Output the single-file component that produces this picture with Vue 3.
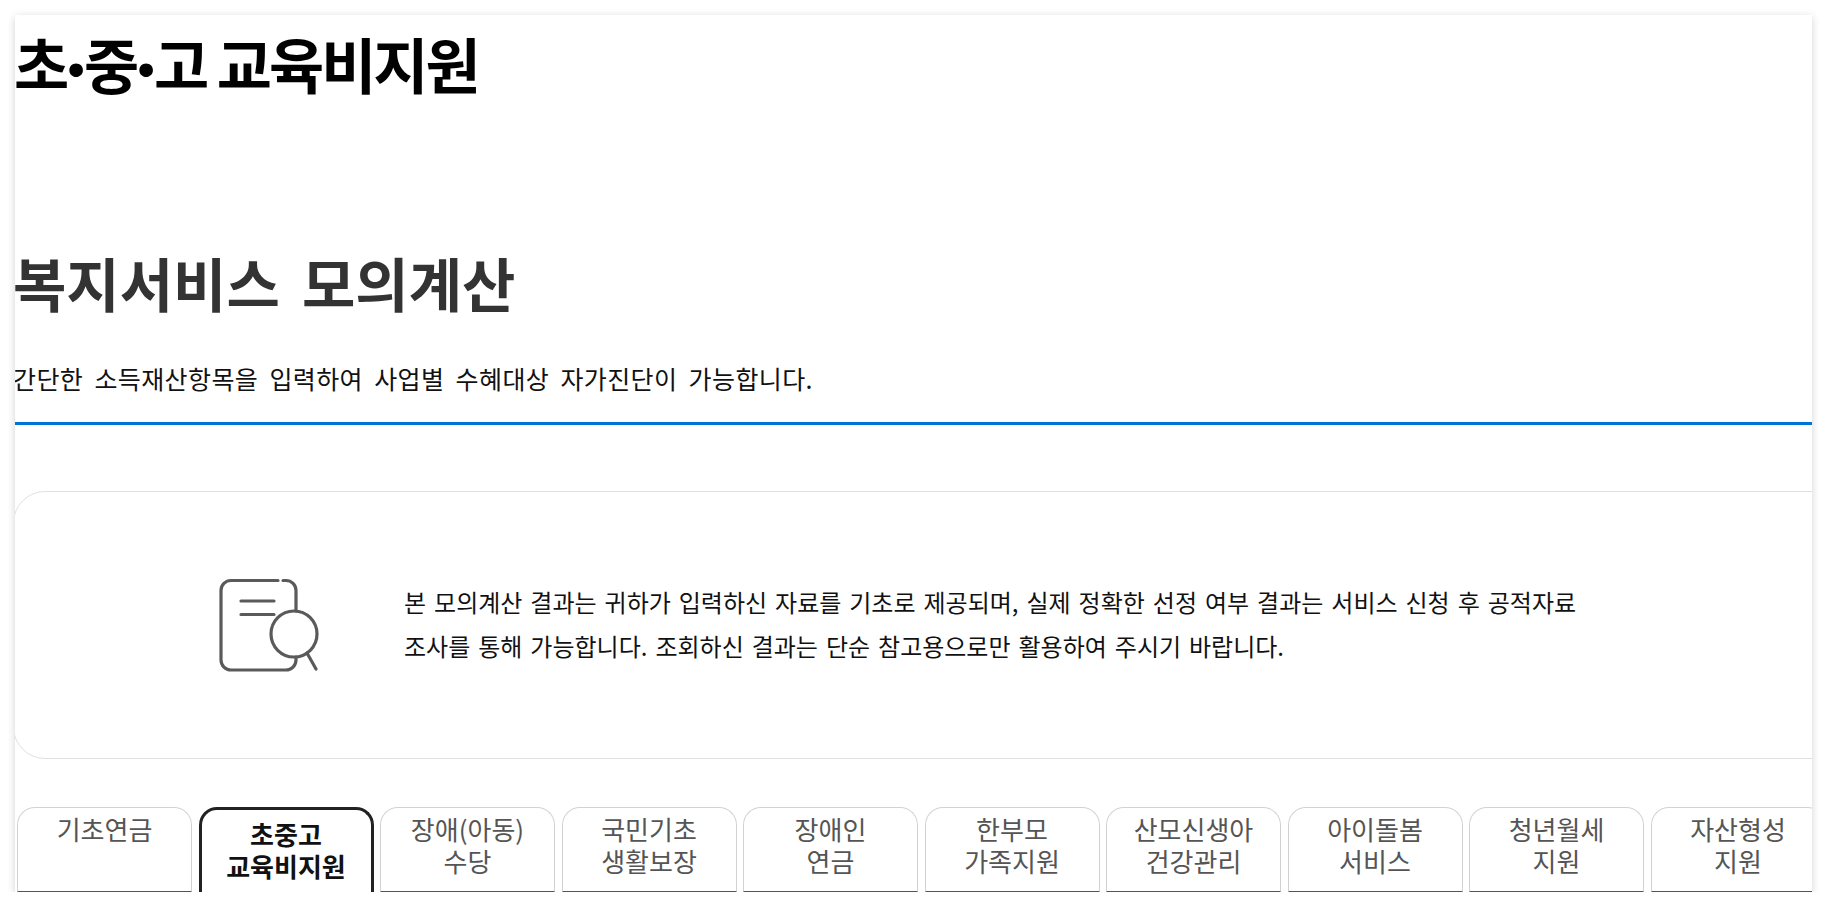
<template>
  <div class="panel">
    <h1 class="page-title">초<span class="dot">·</span>중<span class="dot">·</span>고 교육비지원</h1>

    <section class="intro">
      <h2 class="intro-title">복지서비스 모의계산</h2>
      <p class="intro-desc">간단한 소득재산항목을 입력하여 사업별 수혜대상 자가진단이 가능합니다.</p>
    </section>

    <div class="notice">
      <svg class="notice-icon" width="100" height="96" viewBox="220 576 100 96" fill="none" aria-hidden="true">
        <path d="M279 579.500H232a10 10 0 0 0-10 10V659a10 10 0 0 0 10 10h55a10 10 0 0 0 10-10v-3" />
        <path d="M284 579.500h3a10 10 0 0 1 10 10V610" />
        <path d="M242 600h33M242 613.500h33" />
        <circle cx="295" cy="633" r="23" />
        <path d="M308 652l9 16" />
      </svg>
      <p class="notice-text">
        본 모의계산 결과는 귀하가 입력하신 자료를 기초로 제공되며, 실제 정확한 선정 여부 결과는 서비스 신청 후 공적자료<br />
        조사를 통해 가능합니다. 조회하신 결과는 단순 참고용으로만 활용하여 주시기 바랍니다.
      </p>
    </div>

    <ul class="tabs">
      <li
        v-for="tab in tabs"
        :key="tab.first"
        class="tab"
        :class="{ active: tab.active }"
      >
        <span>{{ tab.first }}</span>
        <span v-if="tab.second">{{ tab.second }}</span>
      </li>
    </ul>
  </div>
</template>

<script setup>
const tabs = [
  { first: '기초연금' },
  { first: '초중고', second: '교육비지원', active: true },
  { first: '장애(아동)', second: '수당' },
  { first: '국민기초', second: '생활보장' },
  { first: '장애인', second: '연금' },
  { first: '한부모', second: '가족지원' },
  { first: '산모신생아', second: '건강관리' },
  { first: '아이돌봄', second: '서비스' },
  { first: '청년월세', second: '지원' },
  { first: '자산형성', second: '지원' },
];
</script>

<style>
html,
body {
  margin: 0;
  background: #fff;
}
</style>

<style scoped>
.panel {
  box-sizing: border-box;
  width: 1797px;
  height: 877px;
  margin: 15px 15px 0;
  overflow: hidden;
  background: #fff;
  box-shadow: 0 2px 8px rgba(0, 0, 0, 0.18);
  font-family: "Noto Sans CJK KR", "Noto Sans", sans-serif;
  color: #000;
}

.page-title {
  margin: 0 0 0 -1px;
  padding-top: 8px;
  height: 80px;
  font-size: 60px;
  line-height: 80px;
  font-weight: 700;
  letter-spacing: -3px;
}

.dot {
  font-family: Lato, sans-serif;
  font-size: 72px;
  line-height: 1;
  letter-spacing: -2px;
  vertical-align: -3px;
}

.intro {
  margin-top: 141px;
  width: 1797px;
  border-bottom: 3px solid #0073d9;
  padding-bottom: 26px;
}

.intro-title {
  margin: 0 0 0 -2px;
  font-size: 58px;
  line-height: 76px;
  font-weight: 700;
  word-spacing: 9px;
  color: #333;
}

.intro-desc {
  margin: 40px 0 0 -2px;
  font-size: 25px;
  line-height: 36px;
  letter-spacing: 0.400px;
  word-spacing: 5.200px;
  color: #111;
}

.notice {
  display: flex;
  align-items: center;
  box-sizing: border-box;
  width: 1840px;
  height: 268px;
  margin: 66px 0 0 -2px;
  padding-left: 205px;
  border: 1px solid #e0e0e0;
  border-radius: 32px;
}

.notice-icon {
  flex: none;
  stroke: #5a5a5a;
  stroke-width: 3.2;
  stroke-linecap: round;
}

.notice-text {
  margin: -2px 0 0 85px;
  font-size: 24px;
  line-height: 44px;
  word-spacing: 2.600px;
  color: #111;
  white-space: nowrap;
}

.tabs {
  display: flex;
  gap: 6.500px;
  width: 1840px;
  margin: 48px 0 0 2px;
  padding: 0;
  list-style: none;
}

.tab {
  flex: none;
  display: flex;
  flex-direction: column;
  align-items: center;
  box-sizing: border-box;
  width: 175px;
  height: 85px;
  padding-top: 5px;
  border: 1px solid #d2d2d2;
  border-bottom: 1px solid #555;
  border-radius: 18px 18px 0 0;
  font-size: 26px;
  line-height: 32px;
  color: #555;
}

.tab.active {
  padding-top: 8px;
  border: 3px solid #222;
  border-bottom: 0;
  color: #111;
  font-weight: 700;
}
</style>
